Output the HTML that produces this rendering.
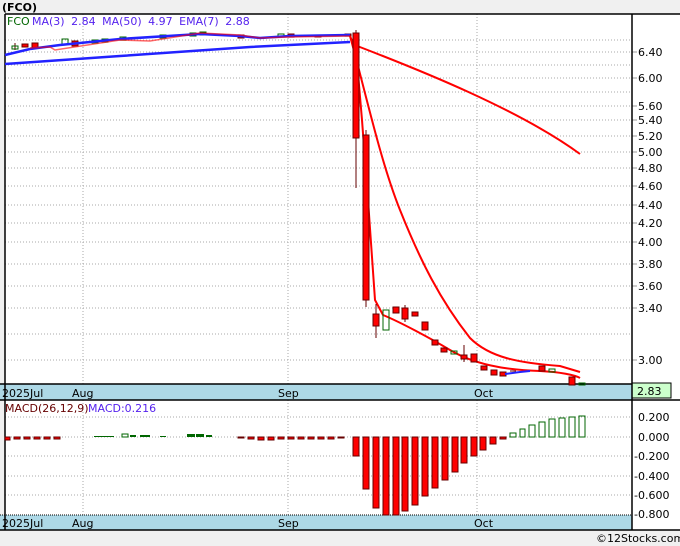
<!DOCTYPE html>
<html><head><meta charset="utf-8"><style>
body{margin:0;background:#f0f0f0;width:680px;height:546px;overflow:hidden;font-family:"Liberation Sans","DejaVu Sans",sans-serif}
svg{display:block}
text{font-family:"DejaVu Sans","Liberation Sans",sans-serif;font-size:11px}
</style></head><body>
<svg width="680" height="546" viewBox="0 0 680 546">
<rect width="680" height="546" fill="#f0f0f0"/>
<text x="2" y="11" font-weight="bold" font-size="12" fill="#000">(FCO)</text>
<rect x="5" y="14" width="675" height="516" fill="#fff"/>
<g stroke="#aaa" stroke-dasharray="1,2" stroke-width="1">
<line x1="5" x2="632" y1="40" y2="40"/><line x1="5" x2="632" y1="52" y2="52"/><line x1="5" x2="632" y1="65" y2="65"/><line x1="5" x2="632" y1="78" y2="78"/><line x1="5" x2="632" y1="92" y2="92"/><line x1="5" x2="632" y1="106" y2="106"/><line x1="5" x2="632" y1="120" y2="120"/><line x1="5" x2="632" y1="136" y2="136"/><line x1="5" x2="632" y1="152" y2="152"/><line x1="5" x2="632" y1="168" y2="168"/><line x1="5" x2="632" y1="186" y2="186"/><line x1="5" x2="632" y1="205" y2="205"/><line x1="5" x2="632" y1="223" y2="223"/><line x1="5" x2="632" y1="242" y2="242"/><line x1="5" x2="632" y1="264" y2="264"/><line x1="5" x2="632" y1="286" y2="286"/><line x1="5" x2="632" y1="308" y2="308"/><line x1="5" x2="632" y1="334" y2="334"/><line x1="5" x2="632" y1="360" y2="360"/>
<line x1="83" x2="83" y1="14" y2="384"/><line x1="288" x2="288" y1="14" y2="384"/><line x1="477" x2="477" y1="14" y2="384"/>
<line x1="5" x2="632" y1="417" y2="417"/><line x1="5" x2="632" y1="437" y2="437"/><line x1="5" x2="632" y1="456" y2="456"/><line x1="5" x2="632" y1="476" y2="476"/><line x1="5" x2="632" y1="495" y2="495"/>
<line x1="83" x2="83" y1="400" y2="515"/><line x1="288" x2="288" y1="400" y2="515"/><line x1="477" x2="477" y1="400" y2="515"/>
</g>
<g stroke="#999"><line x1="632" x2="637" y1="52" y2="52"/><line x1="632" x2="637" y1="78" y2="78"/><line x1="632" x2="637" y1="106" y2="106"/><line x1="632" x2="637" y1="120" y2="120"/><line x1="632" x2="637" y1="136" y2="136"/><line x1="632" x2="637" y1="152" y2="152"/><line x1="632" x2="637" y1="168" y2="168"/><line x1="632" x2="637" y1="186" y2="186"/><line x1="632" x2="637" y1="205" y2="205"/><line x1="632" x2="637" y1="223" y2="223"/><line x1="632" x2="637" y1="242" y2="242"/><line x1="632" x2="637" y1="264" y2="264"/><line x1="632" x2="637" y1="286" y2="286"/><line x1="632" x2="637" y1="308" y2="308"/><line x1="632" x2="637" y1="360" y2="360"/></g>
<g fill="#000"><text x="638" y="56">6.40</text><text x="638" y="82">6.00</text><text x="638" y="110">5.60</text><text x="638" y="124">5.40</text><text x="638" y="140">5.20</text><text x="638" y="156">5.00</text><text x="638" y="172">4.80</text><text x="638" y="190">4.60</text><text x="638" y="209">4.40</text><text x="638" y="227">4.20</text><text x="638" y="246">4.00</text><text x="638" y="268">3.80</text><text x="638" y="290">3.60</text><text x="638" y="312">3.40</text><text x="638" y="364">3.00</text>
<text x="638" y="421">0.200</text><text x="638" y="441">0.000</text><text x="634" y="460">-0.200</text><text x="634" y="480">-0.400</text><text x="634" y="499">-0.600</text><text x="634" y="518">-0.800</text></g>
<rect x="0" y="384" width="632" height="16" fill="#add8e6"/>
<rect x="0" y="515" width="632" height="15" fill="#add8e6"/>
<g fill="#000"><text x="2" y="397" font-size="12">2025Jul</text><text x="72" y="397" font-size="12">Aug</text><text x="278" y="397" font-size="12">Sep</text><text x="474" y="397" font-size="12">Oct</text>
<text x="2" y="527" font-size="12">2025Jul</text><text x="72" y="527" font-size="12">Aug</text><text x="278" y="527" font-size="12">Sep</text><text x="474" y="527" font-size="12">Oct</text></g>
<rect x="632" y="383" width="39" height="15" fill="#ccffcc" stroke="#000"/>
<text x="637" y="395" font-size="12" fill="#000">2.83</text>
<g stroke="#000" fill="none" stroke-width="1.5"><line x1="5" y1="14" x2="680" y2="14"/><line x1="5" y1="14" x2="5" y2="530"/><line x1="632" y1="14" x2="632" y2="530"/><line x1="0" y1="384" x2="632" y2="384"/><line x1="0" y1="400" x2="680" y2="400"/><line x1="0" y1="530" x2="680" y2="530"/></g>
<line x1="0" y1="515" x2="632" y2="515" stroke="#000" stroke-dasharray="1,1"/>
<text x="7" y="25" fill="#006600">FCO</text>
<text x="32" y="25" fill="#5522ee" word-spacing="3">MA(3) 2.84 MA(50) 4.97 EMA(7) 2.88</text>
<text x="5" y="412" fill="#600" font-size="10">MACD(26,12,9)</text><text x="88" y="412" fill="#5522ee" font-size="10">MACD:0.216</text>
<g stroke="#600" stroke-width="1">
<line x1="15" y1="43" x2="15" y2="50"/><rect x="12" y="46" width="6" height="3" fill="none" stroke="#060"/>
<rect x="22" y="44" width="6" height="3" fill="#f00"/><rect x="32" y="43" width="6" height="5" fill="#f00"/>
<rect x="62" y="39" width="6" height="5" fill="none" stroke="#060"/><rect x="72" y="41" width="6" height="5" fill="#f00"/>
<rect x="92" y="40" width="6" height="3" fill="none" stroke="#060"/><rect x="102" y="39" width="6" height="3" fill="none" stroke="#060"/>
<rect x="120" y="37" width="6" height="3" fill="none" stroke="#060"/><rect x="160" y="35" width="6" height="3" fill="#060" stroke="#060"/>
<rect x="190" y="33" width="6" height="3" fill="none" stroke="#060"/><rect x="200" y="32" width="6" height="3" fill="#060" stroke="#060"/>
<rect x="238" y="35" width="6" height="3" fill="#f00"/><rect x="278" y="34" width="6" height="3" fill="none" stroke="#060"/>
<rect x="288" y="34" width="6" height="3" fill="#f00"/><rect x="315" y="35" width="6" height="2" fill="#f00"/><rect x="345" y="34" width="6" height="2" fill="#f00"/>
</g>
<polyline points="5,64 120,56 250,47 350,42" fill="none" stroke="#22f" stroke-width="2.5"/>
<polyline points="5,55 30,49 60,45 120,39 200,34 240,36 260,38 290,36 350,35" fill="none" stroke="#22f" stroke-width="2.5"/>
<polyline points="30,48 50,47 55,50 120,40 150,41 200,33 240,35 260,38 290,37 350,36" fill="none" stroke="#f00" stroke-width="1.5" stroke-opacity=".6"/>
<path d="M352,44 C420,70 520,110 580,154" fill="none" stroke="#f00" stroke-width="2"/>
<path d="M350,36 L356,50 L362,120 L368,200 L375,300 L383,315 C400,322 430,338 450,350 C470,362 500,370 540,371 C560,372 575,375 580,378" fill="none" stroke="#f00" stroke-width="2"/>
<path d="M350,36 C365,90 380,160 400,210 C420,260 440,300 470,338 C490,358 520,363 560,366 L580,372" fill="none" stroke="#f00" stroke-width="2"/>
<g stroke="#600">
<line x1="356" y1="30" x2="356" y2="188"/><rect x="353" y="33" width="6" height="105" fill="#f00"/>
<line x1="366" y1="130" x2="366" y2="307"/><rect x="363" y="135" width="6" height="165" fill="#f00"/>
<line x1="376" y1="304" x2="376" y2="338"/><rect x="373" y="314" width="6" height="12" fill="#f00"/>
<rect x="383" y="310" width="6" height="20" fill="none" stroke="#060"/>
<rect x="393" y="307" width="6" height="6" fill="#f00"/><line x1="405" y1="305" x2="405" y2="322"/><rect x="402" y="308" width="6" height="11" fill="#f00"/>
<rect x="412" y="312" width="6" height="4" fill="#f00"/><rect x="422" y="322" width="6" height="8" fill="#f00"/>
<rect x="432" y="340" width="6" height="5" fill="#f00"/><rect x="441" y="348" width="6" height="4" fill="#f00"/>
<rect x="451" y="351" width="6" height="3" fill="none" stroke="#060"/><line x1="464" y1="345" x2="464" y2="362"/><rect x="461" y="355" width="6" height="4" fill="#f00"/>
<rect x="471" y="354" width="6" height="8" fill="#f00"/><rect x="481" y="366" width="6" height="4" fill="#f00"/><rect x="491" y="370" width="6" height="5" fill="#f00"/>
<rect x="500" y="372" width="6" height="4" fill="#f00"/><line x1="510" y1="371" x2="516" y2="371"/>
<rect x="539" y="366" width="6" height="5" fill="#f00"/><rect x="549" y="369" width="6" height="3" fill="none" stroke="#060"/>
<rect x="569" y="377" width="6" height="8" fill="#f00"/><rect x="579" y="383" width="6" height="2" fill="none" stroke="#060"/>
</g>
<polyline points="505,374 520,372 530,371" fill="none" stroke="#22f" stroke-width="2"/>
<g fill="#f00" stroke="#600">
<rect x="5" y="437" width="5" height="3"/>
<rect x="14" y="437" width="6" height="2"/><rect x="24" y="437" width="6" height="2"/><rect x="34" y="437" width="6" height="2"/><rect x="44" y="437" width="6" height="2"/><rect x="54" y="437" width="6" height="2"/>
<rect x="238" y="437" width="6" height="1"/><rect x="248" y="437" width="6" height="2"/><rect x="258" y="437" width="6" height="3"/><rect x="268" y="437" width="6" height="3"/><rect x="278" y="437" width="6" height="2"/><rect x="288" y="437" width="6" height="2"/><rect x="298" y="437" width="6" height="2"/><rect x="308" y="437" width="6" height="2"/><rect x="318" y="437" width="6" height="2"/><rect x="328" y="437" width="6" height="2"/><rect x="338" y="437" width="6" height="1"/>
<rect x="353" y="437" width="6" height="19"/><rect x="363" y="437" width="6" height="52"/><rect x="373" y="437" width="6" height="71"/><rect x="383" y="437" width="6" height="78"/><rect x="393" y="437" width="6" height="78"/><rect x="402" y="437" width="6" height="74"/><rect x="412" y="437" width="6" height="68"/><rect x="422" y="437" width="6" height="59"/><rect x="432" y="437" width="6" height="51"/><rect x="442" y="437" width="6" height="43"/><rect x="452" y="437" width="6" height="35"/><rect x="461" y="437" width="6" height="26"/><rect x="471" y="437" width="6" height="19"/><rect x="480" y="437" width="6" height="13"/><rect x="490" y="437" width="6" height="7"/><rect x="500" y="437" width="6" height="2"/>
</g>
<g fill="#060"><rect x="94" y="436" width="20" height="1"/><rect x="130" y="435" width="6" height="2"/><rect x="140" y="435" width="10" height="2"/><rect x="160" y="436" width="6" height="1"/><rect x="187" y="434" width="8" height="3"/><rect x="196" y="434" width="8" height="3"/><rect x="206" y="435" width="6" height="2"/></g>
<g fill="none" stroke="#060"><rect x="122" y="434" width="6" height="3"/><rect x="510" y="433" width="6" height="4"/><rect x="520" y="429" width="5" height="8"/><rect x="529" y="425" width="6" height="12"/><rect x="539" y="422" width="6" height="15"/><rect x="549" y="419" width="6" height="18"/><rect x="559" y="418" width="6" height="19"/><rect x="569" y="417" width="6" height="20"/><rect x="579" y="416" width="6" height="21"/></g>
<text x="596" y="542" fill="#000" font-size="11">©12Stocks.com</text>
</svg>
</body></html>
